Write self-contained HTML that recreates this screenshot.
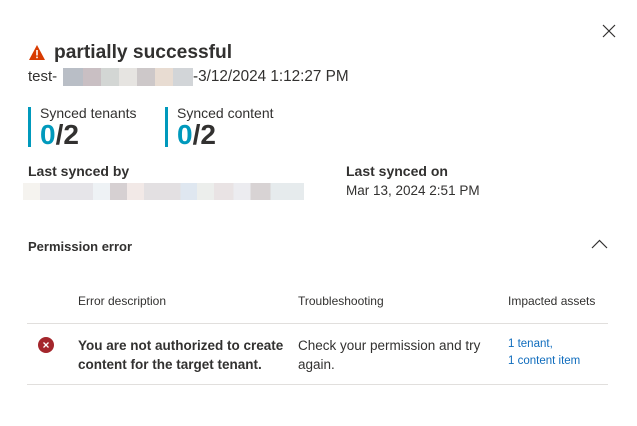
<!DOCTYPE html>
<html><head><style>
body{margin:0;width:637px;height:426px;background:#fff;font-family:"Liberation Sans",sans-serif;color:#323130;position:relative;overflow:hidden}
.a{position:absolute;white-space:nowrap}
.bar{position:absolute;width:3px;background:#0099bc}
.blk{position:absolute;height:100%;top:0}
</style></head><body>
<svg class="a" style="left:602px;top:24px" width="14" height="14"><path d="M1 1L13 13M13 1L1 13" stroke="#323130" stroke-width="1.2"/></svg>
<svg class="a" style="left:28px;top:44px" width="18" height="17"><path d="M9 1L17 16H1Z" fill="#d83b01"/><rect x="8.2" y="6" width="1.6" height="5.5" fill="#fff"/><rect x="8.2" y="12.6" width="1.6" height="1.6" fill="#fff"/></svg>
<div class="a" style="left:54px;top:42px;font-size:19.2px;font-weight:bold">partially successful</div>
<div class="a" style="left:28px;top:68px;font-size:15px">test-</div>
<div class="a" style="left:63px;top:68px;width:130px;height:18px">
<div class="blk" style="left:0;width:20px;background:#b9bec6"></div><div class="blk" style="left:20px;width:18px;background:#c9bfc3"></div><div class="blk" style="left:38px;width:18px;background:#d3d6d4"></div><div class="blk" style="left:56px;width:18px;background:#e6e4e1"></div><div class="blk" style="left:74px;width:18px;background:#cdc8c9"></div><div class="blk" style="left:92px;width:18px;background:#e8dcd2"></div><div class="blk" style="left:110px;width:20px;background:#d2d5d8"></div></div>
<div class="a" style="left:193px;top:68px;font-size:15.3px">-3/12/2024 1:12:27 PM</div>
<div class="bar" style="left:28px;top:107px;height:40px"></div>
<div class="a" style="left:40px;top:105px;font-size:14px">Synced tenants</div>
<div class="a" style="left:40px;top:119px;font-size:28px;font-weight:bold"><span style="color:#0099bc">0</span>/2</div>
<div class="bar" style="left:165px;top:107px;height:40px"></div>
<div class="a" style="left:177px;top:105px;font-size:14px">Synced content</div>
<div class="a" style="left:177px;top:119px;font-size:28px;font-weight:bold"><span style="color:#0099bc">0</span>/2</div>
<div class="a" style="left:28px;top:163px;font-size:14px;font-weight:bold">Last synced by</div>
<div class="a" style="left:23px;top:183px;width:281px;height:17px;background:linear-gradient(90deg,#f5f3ef 0 6%,#e6e5e9 6% 25%,#eef2f5 25% 31%,#d6d0d2 31% 37%,#f2e9e7 37% 43%,#e3e0e2 43% 56%,#dfe7f0 56% 62%,#eceeec 62% 68%,#e9e3e4 68% 75%,#ececf0 75% 81%,#d8d3d4 81% 88%,#e6ebed 88%)"></div>
<div class="a" style="left:346px;top:163px;font-size:14px;font-weight:bold">Last synced on</div>
<div class="a" style="left:346px;top:183px;font-size:13.5px">Mar 13, 2024 2:51 PM</div>
<div class="a" style="left:28px;top:239px;font-size:13px;font-weight:bold">Permission error</div>
<svg class="a" style="left:591px;top:239px" width="17" height="11"><path d="M1 9L8.5 1.5L16 9" fill="none" stroke="#323130" stroke-width="1.2"/></svg>
<div class="a" style="left:78px;top:294px;font-size:12px">Error description</div>
<div class="a" style="left:298px;top:294px;font-size:12px">Troubleshooting</div>
<div class="a" style="left:508px;top:294px;font-size:12px">Impacted assets</div>
<div class="a" style="left:27px;top:323px;width:581px;height:1px;background:#e1dfdd"></div>
<svg class="a" style="left:38px;top:337px" width="16" height="16"><circle cx="8" cy="8" r="8" fill="#a4262c"/><path d="M5.5 5.5L10.5 10.5M10.5 5.5L5.5 10.5" stroke="#fff" stroke-width="1.3"/></svg>
<div class="a" style="left:78px;top:336px;font-size:13.5px;font-weight:bold;line-height:19px">You are not authorized to create<br>content for the target tenant.</div>
<div class="a" style="left:298px;top:336px;font-size:13.5px;line-height:19px">Check your permission and try<br>again.</div>
<div class="a" style="left:508px;top:336px;font-size:11.5px;line-height:17px;color:#0f6cbd">1 tenant,<br>1 content item</div>
<div class="a" style="left:27px;top:384px;width:581px;height:1px;background:#e1dfdd"></div>
</body></html>
